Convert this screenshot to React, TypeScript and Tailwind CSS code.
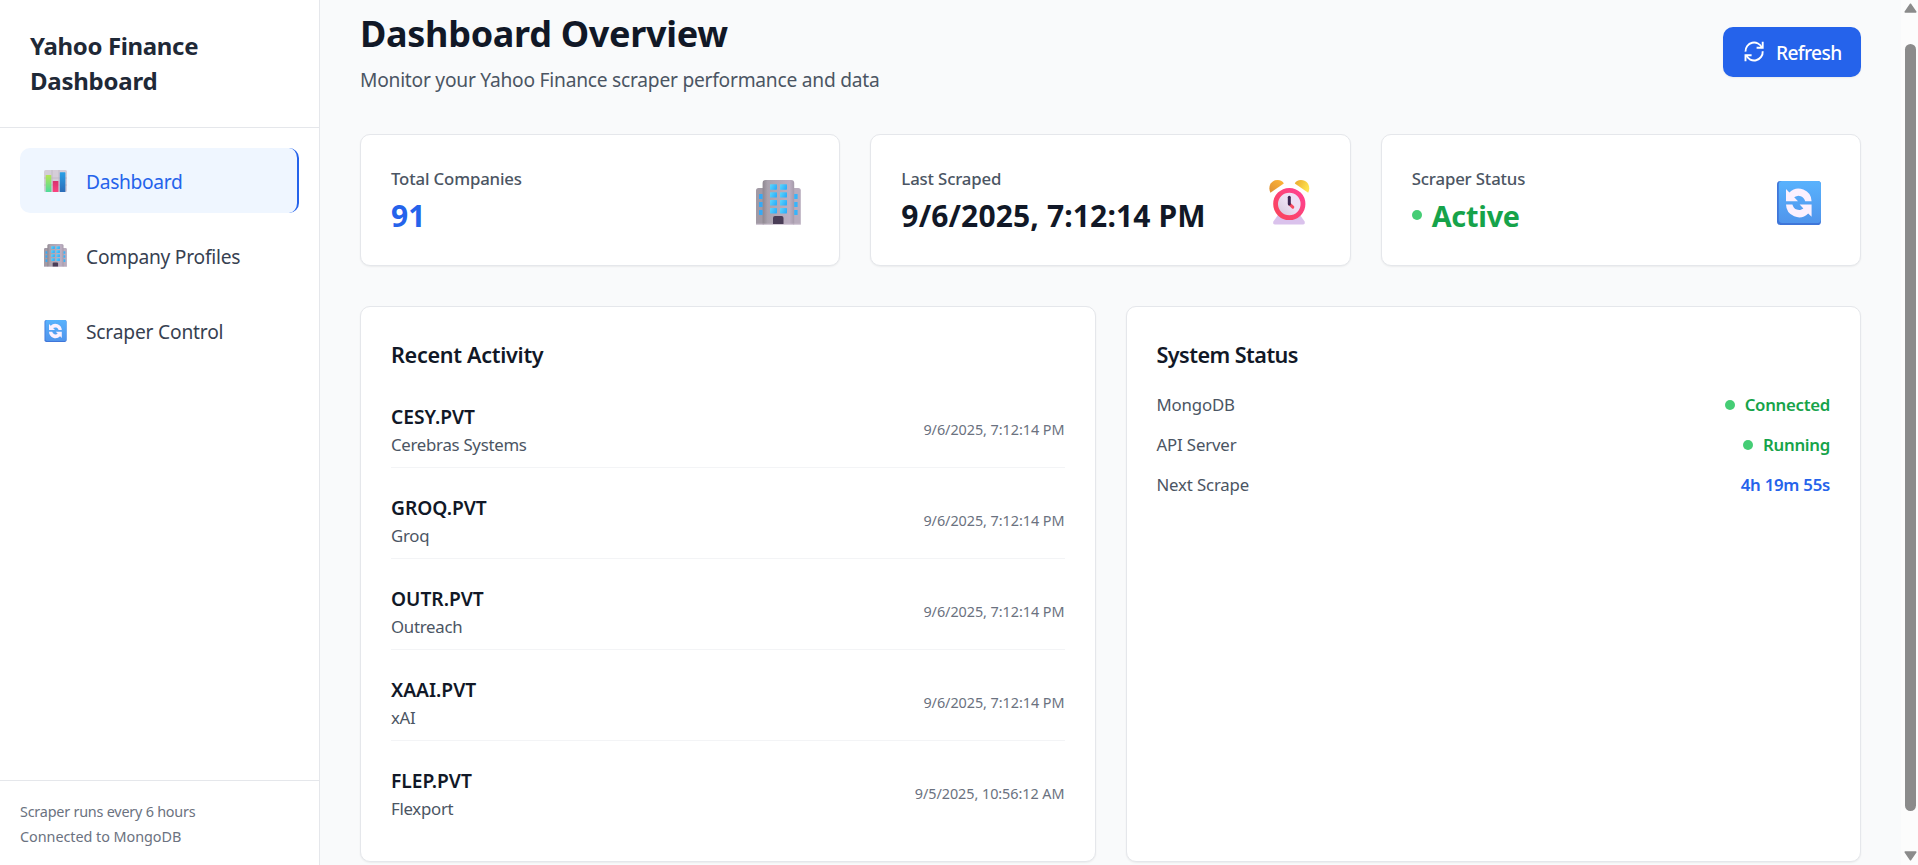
import React from "react";

function ChartIcon() {
  return (
    <svg viewBox="0 0 23 22" className="h-[22px] w-[23px]">
      <defs>
        <linearGradient id="chartGreen" x1="0" y1="0" x2="0" y2="1">
          <stop offset="0" stopColor="#b4e455" />
          <stop offset="1" stopColor="#4edc9c" />
        </linearGradient>
        <linearGradient id="chartPink" x1="0" y1="0" x2="0" y2="1">
          <stop offset="0" stopColor="#d8326e" />
          <stop offset="1" stopColor="#fb4480" />
        </linearGradient>
        <linearGradient id="chartBlue" x1="0" y1="0" x2="0" y2="1">
          <stop offset="0" stopColor="#2aa0e6" />
          <stop offset="1" stopColor="#2c6cb8" />
        </linearGradient>
      </defs>
      <rect width="23" height="22" rx="1.5" fill="#d5cdd8" />
      <path d="M0 8H23M0 15H23M8 0V22M15 0V22" stroke="#bfb5c4" strokeWidth="0.8" />
      <rect x="1.7" y="5" width="5.6" height="17" rx="0.6" fill="url(#chartGreen)" />
      <rect x="8.8" y="11" width="5.6" height="11" rx="0.6" fill="url(#chartPink)" />
      <rect x="15.8" y="2.2" width="5.6" height="19.8" rx="0.6" fill="url(#chartBlue)" />
    </svg>
  );
}

function BuildingIcon({ className }: { className: string }) {
  return (
    <svg viewBox="0 0 45 45" className={className}>
      <defs>
        <linearGradient id="tower" x1="0" y1="0" x2="1" y2="0">
          <stop offset="0" stopColor="#8f8891" />
          <stop offset="0.16" stopColor="#aaa2ad" />
          <stop offset="0.85" stopColor="#bdafc2" />
          <stop offset="1" stopColor="#a69bab" />
        </linearGradient>
        <linearGradient id="pane" x1="0" y1="0" x2="1" y2="0.4">
          <stop offset="0" stopColor="#5fd6fa" />
          <stop offset="1" stopColor="#2fb0fb" />
        </linearGradient>
      </defs>
      <path d="M0 10.5Q0 8 2.5 8H8V44.6H0Z" fill="#a29aa5" />
      <path d="M37 8H42.3Q44.8 8 44.8 10.5V44.6H37Z" fill="#b8acbd" />
      <path d="M6.6 3Q6.6 0 9.6 0H35.2Q38.2 0 38.2 3V44.6H6.6Z" fill="url(#tower)" />
      <path d="M0 43.8H44.8V44.6H0Z" fill="#cfc4d3" />
      {[4.3, 12.2, 20.1, 28].map((y) => (
        <React.Fragment key={y}>
          <rect x="14" y={y} width="7" height="5.4" rx="0.6" fill="url(#pane)" />
          <rect x="24" y={y} width="7" height="5.4" rx="0.6" fill="url(#pane)" />
        </React.Fragment>
      ))}
      {[14, 22, 30].map((y) => (
        <React.Fragment key={y}>
          <rect x="3" y={y} width="3.6" height="5" rx="0.5" fill="#36a9f5" />
          <rect x="38.2" y={y} width="3.4" height="5" rx="0.5" fill="#36b4fb" />
        </React.Fragment>
      ))}
      <path d="M17 38Q17 36 19 36H25.5Q27.5 36 27.5 38V44H17Z" fill="#4a3d57" />
    </svg>
  );
}

function CycleIcon({ className }: { className: string }) {
  const arrow =
    "M9 8L12.4 11.4A13 13 0 0 1 34.6 20.2H28.2A7 7 0 0 0 17.2 16.2L21 20.2H9Z";
  return (
    <svg viewBox="0 0 44 44" className={className}>
      <defs>
        <linearGradient id="tile" x1="0" y1="0" x2="0" y2="1">
          <stop offset="0" stopColor="#58b2fd" />
          <stop offset="1" stopColor="#5095ec" />
        </linearGradient>
      </defs>
      <rect width="44" height="44" rx="3.6" fill="#3f76d9" />
      <rect x="1.8" width="42.2" height="42" rx="3.4" fill="url(#tile)" />
      <path d={arrow} fill="#fbf0fe" />
      <path d={arrow} fill="#fbf0fe" transform="rotate(180 21.8 21.9)" />
    </svg>
  );
}

function ClockIcon() {
  return (
    <svg viewBox="0 0 41 45" className="mr-0.5 h-[45px] w-[41px]">
      <defs>
        <linearGradient id="bellLeft" x1="0" y1="1" x2="1" y2="0">
          <stop offset="0" stopColor="#dd8f35" />
          <stop offset="1" stopColor="#ffb836" />
        </linearGradient>
        <linearGradient id="bellRight" x1="0" y1="0" x2="1" y2="0.5">
          <stop offset="0" stopColor="#e8a72e" />
          <stop offset="1" stopColor="#ffe44f" />
        </linearGradient>
        <linearGradient id="rim" x1="0" y1="1" x2="1" y2="0">
          <stop offset="0" stopColor="#f9455a" />
          <stop offset="1" stopColor="#ff4193" />
        </linearGradient>
        <linearGradient id="dial" x1="0" y1="1" x2="1" y2="0">
          <stop offset="0" stopColor="#cfc3d6" />
          <stop offset="0.5" stopColor="#ecdff3" />
          <stop offset="1" stopColor="#f0dffa" />
        </linearGradient>
      </defs>
      <path d="M9 35H31L35.6 41.5Q36.4 44.4 34 44.4H6Q3.4 44.4 4.4 41.5Z" fill="#dac2ec" />
      <path d="M1.4 12.8C-1.4 7 1.6 0 8.6 0C11.6 0 14 1.4 14.8 3.4Z" fill="url(#bellLeft)" />
      <path d="M39.2 12.8C42 7 39 0 32 0C29 0 26.6 1.4 25.8 3.4Z" fill="url(#bellRight)" />
      <circle cx="20.3" cy="24" r="13.7" fill="url(#dial)" stroke="url(#rim)" strokeWidth="4.8" />
      <path d="M20.5 24L23.8 27.2" stroke="#f8485f" strokeWidth="3" strokeLinecap="round" />
      <path d="M20.3 17.3V24" stroke="#3a2450" strokeWidth="3" strokeLinecap="round" />
    </svg>
  );
}

function RefreshIcon() {
  return (
    <svg
      viewBox="0 0 20 21"
      className="-mt-[2px] h-[21px] w-5"
      fill="none"
      stroke="currentColor"
      strokeWidth="1.9"
    >
      <path d="M1.5 10.6A8.6 8.6 0 0 1 18 6.8" />
      <path d="M18.7 0.8V6.8H12.6" />
      <path d="M18.7 10.2A8.6 8.6 0 0 1 2.2 14.2" />
      <path d="M1.5 20.2V14.2H7.6" />
    </svg>
  );
}

const navItems = [
  {
    label: "Dashboard",
    icon: <ChartIcon />,
    tone: "rounded-[10px] border-r-2 border-[#2563eb] bg-[#eff6ff] text-[#2563eb]",
    track: "tracking-[-0.32px]",
  },
  {
    label: "Company Profiles",
    icon: <BuildingIcon className="size-[23px]" />,
    tone: "text-[#374151]",
    track: "tracking-[-0.25px]",
  },
  {
    label: "Scraper Control",
    icon: <CycleIcon className="h-[22px] w-[23px]" />,
    tone: "text-[#374151]",
    track: "tracking-[-0.19px]",
  },
];

const activity = [
  { ticker: "CESY.PVT", name: "Cerebras Systems", time: "9/6/2025, 7:12:14 PM" },
  { ticker: "GROQ.PVT", name: "Groq", time: "9/6/2025, 7:12:14 PM" },
  { ticker: "OUTR.PVT", name: "Outreach", time: "9/6/2025, 7:12:14 PM" },
  { ticker: "XAAI.PVT", name: "xAI", time: "9/6/2025, 7:12:14 PM" },
  { ticker: "FLEP.PVT", name: "Flexport", time: "9/5/2025, 10:56:12 AM" },
];

function Card({ className, children }: { className: string; children: React.ReactNode }) {
  return (
    <div
      className={`rounded-[10px] border border-[#e5e7eb] bg-white shadow-[0_1px_2px_rgba(0,0,0,0.06)] ${className}`}
    >
      {children}
    </div>
  );
}

function StatCard({
  title,
  icon,
  children,
}: {
  title: string;
  icon: React.ReactNode;
  children: React.ReactNode;
}) {
  return (
    <Card className="flex h-[132px] items-center justify-between pr-[38px] pl-[30px]">
      <div className="pt-0.5">
        <p className="text-[16.8px] leading-[25px] font-medium tracking-[-0.15px] text-[#4b5563]">
          {title}
        </p>
        <div className="mt-[5px] text-[30px] leading-10 font-bold">{children}</div>
      </div>
      <div className="pt-[5px]">{icon}</div>
    </Card>
  );
}

function StatusRow({ label, children }: { label: string; children: React.ReactNode }) {
  return (
    <div className="flex items-center justify-between text-[16.8px] leading-[25px]">
      <span className="tracking-[-0.15px] text-[#4b5563]">{label}</span>
      {children}
    </div>
  );
}

export default function App() {
  return (
    <div className="flex h-[865px] w-full overflow-hidden bg-[#f9fafb] font-['Noto_Sans','Open_Sans',sans-serif]">
      <aside className="flex w-80 shrink-0 flex-col border-r border-[#e5e7eb] bg-white">
        <div className="h-32 border-b border-[#e5e7eb] px-[30px] pt-7">
          <h1 className="text-[24px] leading-[35px] font-bold tracking-[-0.35px] text-[#1f2937]">
            Yahoo Finance
            <br />
            <span className="tracking-[-0.25px]">Dashboard</span>
          </h1>
        </div>
        <nav className="flex flex-1 flex-col gap-2.5 p-5">
          {navItems.map((item) => (
            <a key={item.label} className={`flex h-[65px] items-center pl-6 ${item.tone}`}>
              <span className="flex w-[42px] shrink-0 items-center">{item.icon}</span>
              <span className={`pt-0.5 text-[19.2px] leading-[30px] ${item.track}`}>
                {item.label}
              </span>
            </a>
          ))}
        </nav>
        <div className="h-[85px] border-t border-[#e5e7eb] px-5 pt-[18px] text-[14.4px] leading-[25px] text-[#6b7280]">
          <p className="tracking-[-0.22px]">Scraper runs every 6 hours</p>
          <p className="tracking-[-0.05px]">Connected to MongoDB</p>
        </div>
      </aside>

      <main className="min-w-0 flex-1 px-10 pt-2.5">
        <header className="flex h-[85px] items-start justify-between">
          <div>
            <h2 className="pt-px text-[36px] leading-[45px] font-bold tracking-[-0.3px] text-[#111827]">
              Dashboard Overview
            </h2>
            <p className="mt-[9px] text-[19.2px] leading-[30px] tracking-[-0.24px] text-[#4b5563]">
              Monitor your Yahoo Finance scraper performance and data
            </p>
          </div>
          <button className="mt-[17px] flex h-[50px] w-[138px] items-center rounded-[10px] bg-[#2563eb] pl-[21px] text-white shadow-[0_1px_2px_rgba(0,0,0,0.06)]">
            <RefreshIcon />
            <span className="pt-0.5 pl-3 text-[19.2px] leading-[30px] font-medium tracking-[-0.65px]">
              Refresh
            </span>
          </button>
        </header>

        <section className="mt-[39px] grid grid-cols-3 gap-[30px]">
          <StatCard title="Total Companies" icon={<BuildingIcon className="size-[45px]" />}>
            <span className="text-[#2563eb]">91</span>
          </StatCard>
          <StatCard title="Last Scraped" icon={<ClockIcon />}>
            <span className="tracking-[0.14px] text-[#111827]">9/6/2025, 7:12:14 PM</span>
          </StatCard>
          <StatCard title="Scraper Status" icon={<CycleIcon className="mr-px size-11" />}>
            <span className="flex items-center gap-2.5 text-[28.8px] tracking-[-0.23px] text-[#16a34a]">
              <span className="-mt-0.5 size-2.5 rounded-full bg-[#45cd75]" />
              Active
            </span>
          </StatCard>
        </section>

        <section className="mt-10 grid grid-cols-2 gap-[30px]">
          <Card className="h-[556px] p-[30px]">
            <h3 className="text-[21.6px] leading-[35px] font-semibold tracking-[-0.3px] text-[#111827]">
              Recent Activity
            </h3>
            <ul className="mt-5 flex flex-col gap-[15px]">
              {activity.map((row) => (
                <li
                  key={row.ticker}
                  className="flex items-center justify-between border-b border-[#f3f4f6] py-2.5 last:border-b-0"
                >
                  <div>
                    <p className="text-[19.2px] leading-[30px] font-semibold tracking-[-0.01px] text-[#111827]">
                      {row.ticker}
                    </p>
                    <p className="text-[16.8px] leading-[25px] tracking-[-0.27px] text-[#4b5563]">
                      {row.name}
                    </p>
                  </div>
                  <span className="text-[14.4px] leading-[25px] tracking-[-0.05px] text-[#6b7280]">
                    {row.time}
                  </span>
                </li>
              ))}
            </ul>
          </Card>
          <Card className="h-[556px] p-[30px]">
            <h3 className="text-[21.6px] leading-[35px] font-semibold tracking-[-0.55px] text-[#111827]">
              System Status
            </h3>
            <div className="mt-5 flex flex-col gap-[15px]">
              <StatusRow label="MongoDB">
                <span className="flex items-center gap-2.5 font-semibold tracking-[-0.28px] text-[#16a34a]">
                  <span className="size-2.5 rounded-full bg-[#45cd75]" />
                  Connected
                </span>
              </StatusRow>
              <StatusRow label="API Server">
                <span className="flex items-center gap-2.5 font-semibold tracking-[-0.28px] text-[#16a34a]">
                  <span className="size-2.5 rounded-full bg-[#45cd75]" />
                  Running
                </span>
              </StatusRow>
              <StatusRow label="Next Scrape">
                <span className="font-semibold tracking-[-0.26px] text-[#2563eb]">4h 19m 55s</span>
              </StatusRow>
            </div>
          </Card>
        </section>
      </main>

      <div className="flex w-[17px] shrink-0 flex-col items-center bg-[#fcfcfc] pt-[3px] pb-1 pl-px">
        <svg viewBox="0 0 13 10" className="h-2.5 w-[13px]">
          <path d="M6.5 1.2L11.8 9H1.2Z" fill="#8b8b8b" stroke="#8b8b8b" strokeWidth="1.5" strokeLinejoin="round" />
        </svg>
        <div className="mt-[31px] h-[767px] w-[11px] rounded-full bg-[#8b8b8b]" />
        <div className="flex-1" />
        <svg viewBox="0 0 13 10" className="h-2.5 w-[13px]">
          <path d="M6.5 8.8L11.8 1H1.2Z" fill="#8b8b8b" stroke="#8b8b8b" strokeWidth="1.5" strokeLinejoin="round" />
        </svg>
      </div>
    </div>
  );
}
